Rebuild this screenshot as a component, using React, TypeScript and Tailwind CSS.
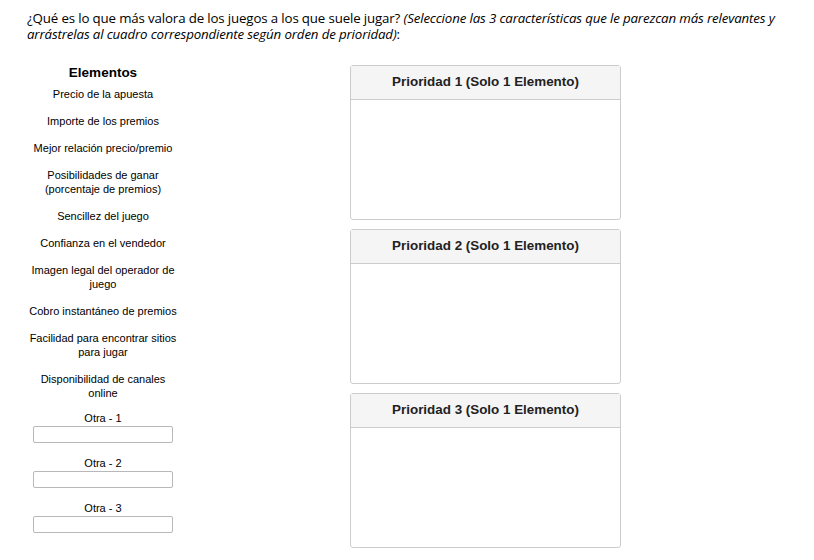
const items: string[][] = [
  ['Precio de la apuesta'],
  ['Importe de los premios'],
  ['Mejor relación precio/premio'],
  ['Posibilidades de ganar', '(porcentaje de premios)'],
  ['Sencillez del juego'],
  ['Confianza en el vendedor'],
  ['Imagen legal del operador de', 'juego'],
  ['Cobro instantáneo de premios'],
  ['Facilidad para encontrar sitios', 'para jugar'],
  ['Disponibilidad de canales', 'online'],
];

function PriorityBox({ n }: { n: number }) {
  return (
    <div className="flex h-[155px] w-[271px] flex-col rounded-[3px] border border-[#cccccc] bg-white">
      <div className="flex h-[34px] items-center justify-center border-b border-[#cccccc] bg-[#f5f5f5] text-[13.4px] font-bold text-[#222222]">
        Prioridad {n} (Solo 1 Elemento)
      </div>
      <div className="flex-1" />
    </div>
  );
}

export default function App() {
  return (
    <div className="min-h-screen bg-white pl-[27px] pt-[10px] font-['Liberation_Sans',Arial,sans-serif] text-black">
      <p className="font-['Open_Sans',sans-serif] text-[13.3px] leading-[16px] tracking-[-0.15px]">
        ¿Qué es lo que más valora de los juegos a los que suele jugar?{' '}
        <em>
          (Seleccione las 3 características que le parezcan más relevantes y
          <br />
          arrástrelas al cuadro correspondiente según orden de prioridad)
        </em>
        :
      </p>

      <div className="mt-[23px] flex gap-[171px]">
        <div className="flex w-[152px] flex-col items-center text-center">
          <h3 className="text-[13.5px] font-bold leading-[16px]">Elementos</h3>
          <ul className="mt-[6px] flex flex-col items-center gap-[13px] text-[11px] leading-[14px]">
            {items.map((lines) => (
              <li key={lines[0]}>
                {lines.map((l) => (
                  <div key={l}>{l}</div>
                ))}
              </li>
            ))}
          </ul>
          <div className="mt-[11px] flex flex-col items-center gap-[13px] text-[11px] leading-[14px]">
            {[1, 2, 3].map((i) => (
              <label key={i} className="flex flex-col items-center gap-[1px]">
                <span>Otra - {i}</span>
                <input
                  type="text"
                  className="h-[17px] w-[140px] rounded-[2px] border border-[#b8b8b8] bg-white"
                />
              </label>
            ))}
          </div>
        </div>

        <div className="flex flex-col gap-[9px]">
          <PriorityBox n={1} />
          <PriorityBox n={2} />
          <PriorityBox n={3} />
        </div>
      </div>
    </div>
  );
}
